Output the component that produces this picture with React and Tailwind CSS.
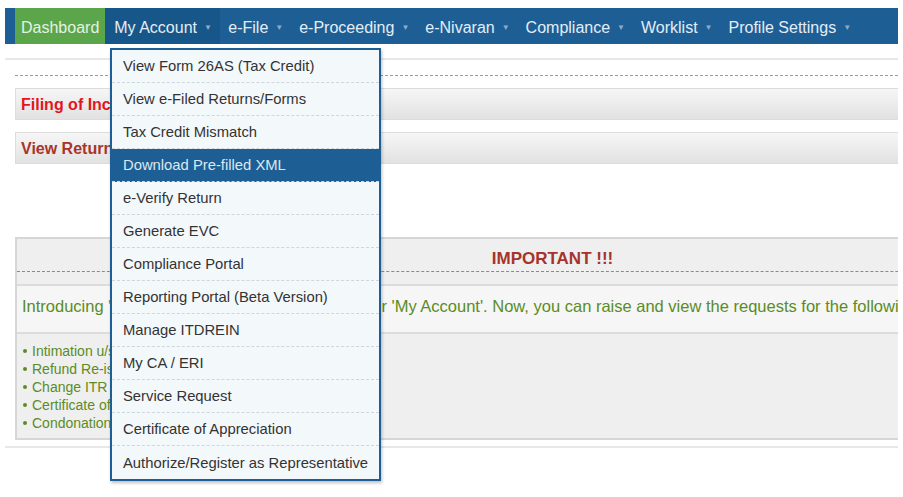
import React from "react";

const navItems = [
  "e-File",
  "e-Proceeding",
  "e-Nivaran",
  "Compliance",
  "Worklist",
  "Profile Settings",
];

const menuItems = [
  "View Form 26AS (Tax Credit)",
  "View e-Filed Returns/Forms",
  "Tax Credit Mismatch",
  "Download Pre-filled XML",
  "e-Verify Return",
  "Generate EVC",
  "Compliance Portal",
  "Reporting Portal (Beta Version)",
  "Manage ITDREIN",
  "My CA / ERI",
  "Service Request",
  "Certificate of Appreciation",
  "Authorize/Register as Representative",
];

const bullets = [
  "Intimation u/s 143(1)/154/155/250/254/263/264",
  "Refund Re-issue",
  "Change ITR Form V Address",
  "Certificate of Appreciation",
  "Condonation Request",
];

const Caret = () => (
  <span className="ml-[7px] text-[8px] text-[#8fabc6]">▼</span>
);

export default function App() {
  return (
    <div className="relative w-[903px] h-[497px] overflow-hidden bg-white font-['Liberation_Sans',Arial,sans-serif]">
      <div className="ml-[5px] w-[893px] overflow-hidden pt-[8px]">
        {/* top navigation */}
        <nav className="flex h-[36px] bg-[#1d5f95] pl-[10px] text-[16px] text-[#e4edf5]">
          <div className="flex items-center bg-[#5ba64b] px-[6px] pt-[4px] text-[#e6f1e2]">Dashboard</div>
          <div className="flex w-[115px] items-center bg-[#175689] pl-[9px] pt-[4px]">
            My Account
            <Caret />
          </div>
          {navItems.map((item) => (
            <div key={item} className="flex items-center px-[8px] pt-[4px] whitespace-nowrap">
              {item}
              <Caret />
            </div>
          ))}
        </nav>

        <div className="mt-[14px] h-[2px] bg-[#e8e8e8]" />
        <div className="ml-[10px] mt-[15px] border-t border-dashed border-[#9a9a9a]" />

        <div className="w-[1075px] ml-[10px]">
          <div className="mt-[12px] flex h-[32px] items-center border border-[#dcdcdc] bg-gradient-to-b from-[#f6f6f6] to-[#e2e2e2] pl-[5px] pt-[1px] text-[16px] font-bold text-[#e3151c]">
            Filing of Income Tax Return
          </div>
          <div className="mt-[12px] flex h-[32px] items-center border border-[#dcdcdc] bg-gradient-to-b from-[#f6f6f6] to-[#e2e2e2] pl-[5px] pt-[1px] text-[16px] font-bold text-[#a8342a]">
            View Returns / Forms
          </div>

          {/* important notice */}
          <div className="mt-[73px] border-[2px] border-[#d6d6d6] bg-[#efefef]">
            <div className="flex h-[33px] items-end justify-center border-b border-dashed border-[#8a8a8a] text-[17px] font-bold text-[#a7342a]">
              IMPORTANT !!!
            </div>
            <div className="mt-[12px] border-y-[2px] border-[#dcdcdc] bg-[#f6f6f6] pb-[13px] pl-[5px] pt-[8px] text-[16.5px] text-[#5b8c25] whitespace-nowrap">
              Introducing 'Service Request' functionalities under 'My Account'. Now, you can raise and view the requests for the following:
            </div>
            <ul className="pb-[6px] pl-[6px] pt-[8px] text-[14px] leading-[18px] text-[#5b8c25]">
              {bullets.map((b) => (
                <li key={b} className="flex items-center">
                  <span className="mr-[5px] inline-block h-[4px] w-[4px] rounded-full bg-[#5b8c25]" />
                  {b}
                </li>
              ))}
            </ul>
          </div>
        </div>
        <div className="mt-[6px] h-[2px] bg-[#e8e8e8]" />
      </div>

      {/* My Account dropdown */}
      <div className="absolute left-[110px] top-[48px] w-[271px] border-[2px] border-[#1d5f95] bg-[#f3f8fb] shadow-[1px_2px_3px_rgba(0,0,0,0.25)]">
        {menuItems.map((item, i) => (
          <div
            key={item}
            className={`flex h-[33px] items-center pl-[11px] pt-[1px] text-[14.8px] whitespace-nowrap ${
              i === 3
                ? "bg-[#1d5f95] text-[#dce7f0]"
                : "text-[#333333]"
            } ${i < menuItems.length - 1 ? "border-b border-dashed border-[#cfd6dc]" : ""}`}
          >
            {item}
          </div>
        ))}
      </div>
    </div>
  );
}
